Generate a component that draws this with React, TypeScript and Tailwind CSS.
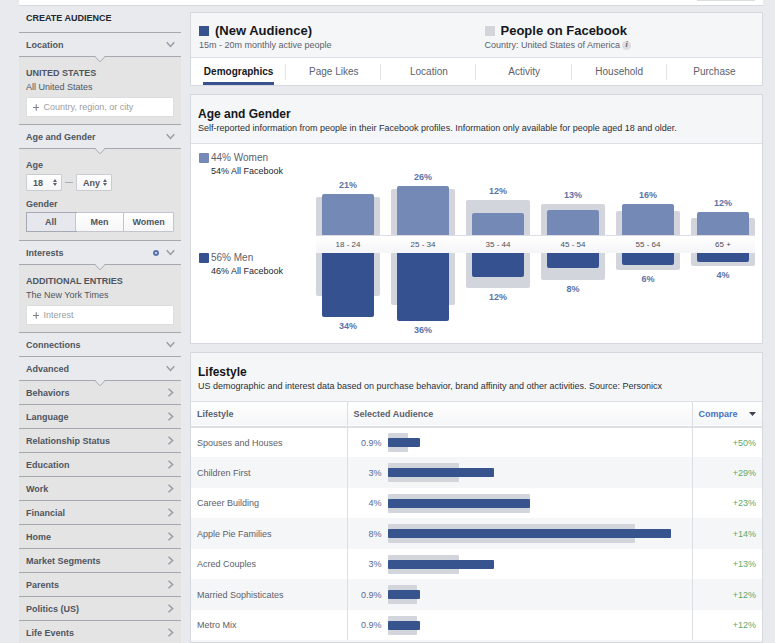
import { useState, type ReactNode } from 'react'

const tabs = ['Demographics', 'Page Likes', 'Location', 'Activity', 'Household', 'Purchase']

const moreSections = [
    'Behaviors',
    'Language',
    'Relationship Status',
    'Education',
    'Work',
    'Financial',
    'Home',
    'Market Segments',
    'Parents',
    'Politics (US)',
    'Life Events',
]

// bar heights are in pixels
const ageGroups = [
    { label: '18 - 24', women: '21%', men: '34%', womenBar: 41, womenAll: 38, menBar: 64, menAll: 43 },
    { label: '25 - 34', women: '26%', men: '36%', womenBar: 49, womenAll: 46, menBar: 68, menAll: 52 },
    { label: '35 - 44', women: '12%', men: '12%', womenBar: 22, womenAll: 35, menBar: 24, menAll: 35 },
    { label: '45 - 54', women: '13%', men: '8%', womenBar: 25, womenAll: 31, menBar: 15, menAll: 27 },
    { label: '55 - 64', women: '16%', men: '6%', womenBar: 31, womenAll: 24, menBar: 12, menAll: 17 },
    { label: '65 +', women: '12%', men: '4%', womenBar: 23, womenAll: 17, menBar: 9, menAll: 13 },
]

// bar widths are in percent of the longest bar
const lifestyles = [
    { name: 'Spouses and Houses', share: '0.9%', bar: 11.5, all: 7.2, compare: '+50%' },
    { name: 'Children First', share: '3%', bar: 37.8, all: 25.1, compare: '+29%' },
    { name: 'Career Building', share: '4%', bar: 50.5, all: 50.5, compare: '+23%' },
    { name: 'Apple Pie Families', share: '8%', bar: 100, all: 87.3, compare: '+14%' },
    { name: 'Acred Couples', share: '3%', bar: 37.8, all: 25.1, compare: '+13%' },
    { name: 'Married Sophisticates', share: '0.9%', bar: 11.5, all: 10.5, compare: '+12%' },
    { name: 'Metro Mix', share: '0.9%', bar: 11.5, all: 10.5, compare: '+12%' },
]

function Chevron({ direction }: { direction: 'down' | 'right' }) {
    return (
        <svg
            className="h-[9px] w-[9px]"
            viewBox="0 0 9 9"
            fill="none"
            stroke="#989ca6"
            strokeWidth="1.5"
            aria-hidden="true"
        >
            <path d={direction === 'down' ? 'M0.7 2.3 L4.5 6.4 L8.3 2.3' : 'M2.5 0.7 L6.6 4.5 L2.5 8.3'} />
        </svg>
    )
}

function Notch() {
    return (
        <svg
            className="absolute top-full left-1/2 z-10 h-[7px] w-3 -translate-x-1/2"
            viewBox="0 0 12 7"
            aria-hidden="true"
        >
            <path d="M0 -1 L6 5.6 L12 -1 Z" fill="#e8eaee" />
            <path d="M0 -0.5 L6 5.8 L12 -0.5" fill="none" stroke="#a5a8af" />
        </svg>
    )
}

function SectionHeader({
    title,
    open = false,
    nested = false,
    dot = false,
}: {
    title: string
    open?: boolean
    nested?: boolean
    dot?: boolean
}) {
    return (
        <button
            type="button"
            className={`flex h-6 w-full items-center border-b border-[#a5a8af] pr-1.5 pl-[7px] text-left font-bold text-[#4f5560] ${
                nested ? 'bg-[#e4e4e5]' : 'relative'
            }`}
        >
            <span className="flex-1">{title}</span>
            {dot && <span className="mr-[7px] h-1.5 w-1.5 rounded-full border-2 border-[#5873ad] bg-[#dfe5f1]" />}
            <Chevron direction={nested ? 'right' : 'down'} />
            {open && <Notch />}
        </button>
    )
}

function SectionBody({ children }: { children: ReactNode }) {
    return <div className="border-b border-[#a5a8af] bg-[#e4e4e5] px-[7px] text-[#4f5560]">{children}</div>
}

function AddField({ label }: { label: string }) {
    return (
        <label className="mt-1 flex h-5 items-center gap-1 border border-[#dcdee2] bg-white pl-1.5">
            <svg className="h-[7px] w-[7px]" viewBox="0 0 7 7" stroke="#7d828c" strokeWidth="1.2" aria-hidden="true">
                <path d="M3.5 0 V7 M0 3.5 H7" />
            </svg>
            <input
                type="text"
                aria-label={label}
                placeholder={label}
                className="w-full min-w-0 bg-transparent outline-none placeholder:text-[#9a9da3]"
            />
        </label>
    )
}

function AgeSelect({ label, value, options }: { label: string; value: string; options: string[] }) {
    return (
        <div className="relative">
            <select
                aria-label={label}
                defaultValue={value}
                className="block h-[17px] w-9 appearance-none rounded-[1px] border border-[#c9ccd1] bg-gradient-to-b from-white to-[#f5f5f7] pr-2 pl-1.5 font-bold"
            >
                {options.map((option) => (
                    <option key={option}>{option}</option>
                ))}
            </select>
            <svg
                className="pointer-events-none absolute top-[5px] right-[5px] h-[7px] w-[4px]"
                viewBox="0 0 4 7"
                fill="#5b606b"
                aria-hidden="true"
            >
                <path d="M2 0 L4 3 H0 Z M2 7 L0 4 H4 Z" />
            </svg>
        </div>
    )
}

function GenderPicker() {
    const [gender, setGender] = useState('All')

    return (
        <div className="mt-0.5 grid h-5 grid-cols-3 rounded-[1px] border border-[#c3c6cc] bg-white">
            {['All', 'Men', 'Women'].map((option) => (
                <button
                    key={option}
                    type="button"
                    aria-pressed={gender === option}
                    onClick={() => setGender(option)}
                    className={`border-r border-[#c3c6cc] font-bold last:border-r-0 ${
                        gender === option
                            ? 'bg-[#e6e8ed] outline outline-[#a3a9b5]'
                            : 'bg-gradient-to-b from-white to-[#f6f6f8]'
                    }`}
                >
                    {option}
                </button>
            ))}
        </div>
    )
}

function Sidebar() {
    return (
        <aside className="w-[162px] shrink-0 leading-3">
            <h2 className="flex h-[27px] items-center border-b border-[#a5a8af] pb-0.5 pl-[7px] font-bold text-[#23272f]">
                CREATE AUDIENCE
            </h2>

            <SectionHeader title="Location" open />
            <SectionBody>
                <div className="pt-[10px] pb-[7px]">
                    <h3 className="font-bold">UNITED STATES</h3>
                    <p className="mt-0.5">All United States</p>
                    <AddField label="Country, region, or city" />
                </div>
            </SectionBody>

            <SectionHeader title="Age and Gender" open />
            <SectionBody>
                <div className="pt-[10px] pb-2">
                    <p className="font-bold">Age</p>
                    <div className="mt-[3px] flex items-center gap-[3px]">
                        <AgeSelect label="Minimum age" value="18" options={['18', '25', '35', '45']} />
                        <span className="h-px w-2 bg-[#aaadb4]" />
                        <AgeSelect label="Maximum age" value="Any" options={['Any', '34', '44', '54']} />
                    </div>
                    <p className="mt-[7px] font-bold">Gender</p>
                    <GenderPicker />
                </div>
            </SectionBody>

            <SectionHeader title="Interests" open dot />
            <SectionBody>
                <div className="pt-[10px] pb-[7px]">
                    <h3 className="font-bold">ADDITIONAL ENTRIES</h3>
                    <p className="mt-0.5">The New York Times</p>
                    <AddField label="Interest" />
                </div>
            </SectionBody>

            <SectionHeader title="Connections" />
            <SectionHeader title="Advanced" open />
            {moreSections.map((section) => (
                <SectionHeader key={section} title={section} nested />
            ))}
        </aside>
    )
}

function AudienceHeader() {
    const [active, setActive] = useState('Demographics')

    return (
        <section className="border border-[#d5d8de] bg-white">
            <div className="flex h-[45px] border-b border-[#dcdfe4] bg-[#f5f6f8] px-2 pt-[10px]">
                <div className="w-1/2">
                    <h1 className="flex items-center gap-[6px] text-[13px] leading-4 font-bold text-[#14171c]">
                        <span className="h-[10px] w-[10px] bg-[#38548f]" />
                        (New Audience)
                    </h1>
                    <p className="text-[#5c616b]">15m - 20m monthly active people</p>
                </div>
                <div className="w-1/2 pl-2">
                    <h2 className="flex items-center gap-[6px] text-[13px] leading-4 font-bold text-[#14171c]">
                        <span className="h-[10px] w-[10px] bg-[#d2d5da]" />
                        People on Facebook
                    </h2>
                    <p className="flex items-center gap-0.5 text-[#5c616b]">
                        Country: United States of America
                        <span className="flex h-[9px] w-[9px] items-center justify-center rounded-full bg-[#dcdee2] font-['Liberation_Serif',serif] text-[8px] font-bold italic">
                            i
                        </span>
                    </p>
                </div>
            </div>
            <nav className="grid h-[27px] grid-cols-6 text-[10px]">
                {tabs.map((tab) => (
                    <div key={tab} className="relative flex justify-center">
                        <button
                            type="button"
                            onClick={() => setActive(tab)}
                            className={`border-b-3 px-px pt-[3px] ${
                                active === tab
                                    ? 'border-[#3b5290] font-bold text-[#14171c]'
                                    : 'border-transparent text-[#5c616b]'
                            }`}
                        >
                            {tab}
                        </button>
                        {tab !== 'Purchase' && <span className="absolute top-1.5 right-0 h-4 w-px bg-[#e3e5e9]" />}
                    </div>
                ))}
            </nav>
        </section>
    )
}

function CardHeader({ title, text }: { title: string; text: string }) {
    return (
        <header className="h-[49px] border-b border-[#dcdfe4] bg-[#f5f6f8] px-[7px] pt-[11px]">
            <h2 className="text-[12px] leading-4 font-bold text-[#14171c]">{title}</h2>
            <p className="text-[#2b2f37]">{text}</p>
        </header>
    )
}

function Legend({ color, title, text }: { color: string; title: string; text: string }) {
    return (
        <div className="flex gap-0.5">
            <span className={`mt-[2px] h-[10px] w-[10px] rounded-[1px] ${color}`} />
            <div>
                <p className="text-[10px] leading-[14px] text-[#5c616b]">{title}</p>
                <p className="text-[#23272f]">{text}</p>
            </div>
        </div>
    )
}

function AgeGenderChart() {
    return (
        <section className="border border-[#d5d8de] bg-white">
            <CardHeader
                title="Age and Gender"
                text="Self-reported information from people in their Facebook profiles. Information only available for people aged 18 and older."
            />
            <div className="flex pr-[7px] pl-2">
                <div className="flex w-[117px] shrink-0 flex-col gap-[74px] pt-[7px]">
                    <Legend color="bg-[#7589b7]" title="44% Women" text="54% All Facebook" />
                    <Legend color="bg-[#35518f]" title="56% Men" text="46% All Facebook" />
                </div>
                <div className="flex-1 font-bold text-[#5c73a8]">
                    <div className="grid h-[91px] grid-cols-6 items-end gap-[11px]">
                        {ageGroups.map((group) => (
                            <div key={group.label} className="text-center">
                                <p className="pb-[3px] leading-3">{group.women}</p>
                                <div className="grid items-end">
                                    <div
                                        className="col-start-1 row-start-1 rounded-t-[2px] bg-[#d2d5db]"
                                        style={{ height: group.womenAll }}
                                    />
                                    <div
                                        className="col-start-1 row-start-1 mx-[6px] rounded-t-[2px] bg-[#7589b7]"
                                        style={{ height: group.womenBar }}
                                    />
                                </div>
                            </div>
                        ))}
                    </div>
                    <div className="grid h-[18px] grid-cols-6 items-center gap-[11px] border-t border-[#dcdee2] bg-gradient-to-b from-white to-[#f5f5f7] text-center text-[8px] font-normal text-[#4b4f58]">
                        {ageGroups.map((group) => (
                            <span key={group.label}>{group.label}</span>
                        ))}
                    </div>
                    <div className="grid h-[90px] grid-cols-6 items-start gap-[11px]">
                        {ageGroups.map((group) => (
                            <div key={group.label} className="text-center">
                                <div className="grid items-start">
                                    <div
                                        className="col-start-1 row-start-1 rounded-b-[2px] bg-[#d2d5db]"
                                        style={{ height: group.menAll }}
                                    />
                                    <div
                                        className="col-start-1 row-start-1 mx-[6px] rounded-b-[2px] bg-[#35518f]"
                                        style={{ height: group.menBar }}
                                    />
                                </div>
                                <p className="pt-[3px] leading-3">{group.men}</p>
                            </div>
                        ))}
                    </div>
                </div>
            </div>
        </section>
    )
}

function LifestyleTable() {
    return (
        <section className="flex-1 border border-[#d5d8de] bg-[#f5f6f8]">
            <CardHeader
                title="Lifestyle"
                text="US demographic and interest data based on purchase behavior, brand affinity and other activities. Source: Personicx"
            />
            <table className="w-full table-fixed border-collapse text-[#5c616b]">
                <thead>
                    <tr className="h-[25px] border-b-2 border-[#dcdfe4] bg-gradient-to-b from-white to-[#f5f6f8] text-left">
                        <th className="w-[156px] border-r border-[#dcdfe4] pl-1.5">Lifestyle</th>
                        <th className="border-r border-[#dcdfe4] pl-1.5">Selected Audience</th>
                        <th className="w-[70px] px-1.5">
                            <button type="button" className="flex w-full items-center justify-between text-[#4a70c4]">
                                Compare
                                <svg className="h-1 w-[7px]" viewBox="0 0 7 4" fill="#3c4150" aria-hidden="true">
                                    <path d="M0 0 H7 L3.5 4 Z" />
                                </svg>
                            </button>
                        </th>
                    </tr>
                </thead>
                <tbody>
                    {lifestyles.map((row) => (
                        <tr key={row.name} className="h-[30px] bg-white even:h-[31px] even:bg-[#f5f6f8]">
                            <td className="border-r border-[#dcdfe4] pl-1.5">{row.name}</td>
                            <td className="border-r border-[#dcdfe4]">
                                <div className="flex items-center gap-1.5 pr-[21px]">
                                    <span className="w-[34px] text-right text-[#55699e]">{row.share}</span>
                                    <div className="grid flex-1 items-center">
                                        <div
                                            className="col-start-1 row-start-1 h-[19px] rounded-[1px] bg-[#d2d5db]"
                                            style={{ width: `${row.all}%` }}
                                        />
                                        <div
                                            className="col-start-1 row-start-1 h-[9px] rounded-[1px] bg-[#38548f]"
                                            style={{ width: `${row.bar}%` }}
                                        />
                                    </div>
                                </div>
                            </td>
                            <td className="pr-1.5 text-right text-[#5fa866]">{row.compare}</td>
                        </tr>
                    ))}
                </tbody>
            </table>
        </section>
    )
}

export default function App() {
    return (
        <div className="flex h-screen flex-col overflow-hidden bg-[#e8eaee] pr-3 pl-[19px] font-['Liberation_Sans',Arial,sans-serif] text-[9px] leading-3">
            <div className="flex h-[6px] shrink-0 justify-end border-b border-[#d5d8de] bg-white pr-2">
                <div className="h-px w-[58px] bg-[#dcdee2]" />
            </div>
            <div className="flex min-h-0 flex-1 gap-[9px]">
                <Sidebar />
                <main className="flex min-w-0 flex-1 flex-col gap-2 pt-[6px]">
                    <AudienceHeader />
                    <AgeGenderChart />
                    <LifestyleTable />
                </main>
            </div>
        </div>
    )
}
